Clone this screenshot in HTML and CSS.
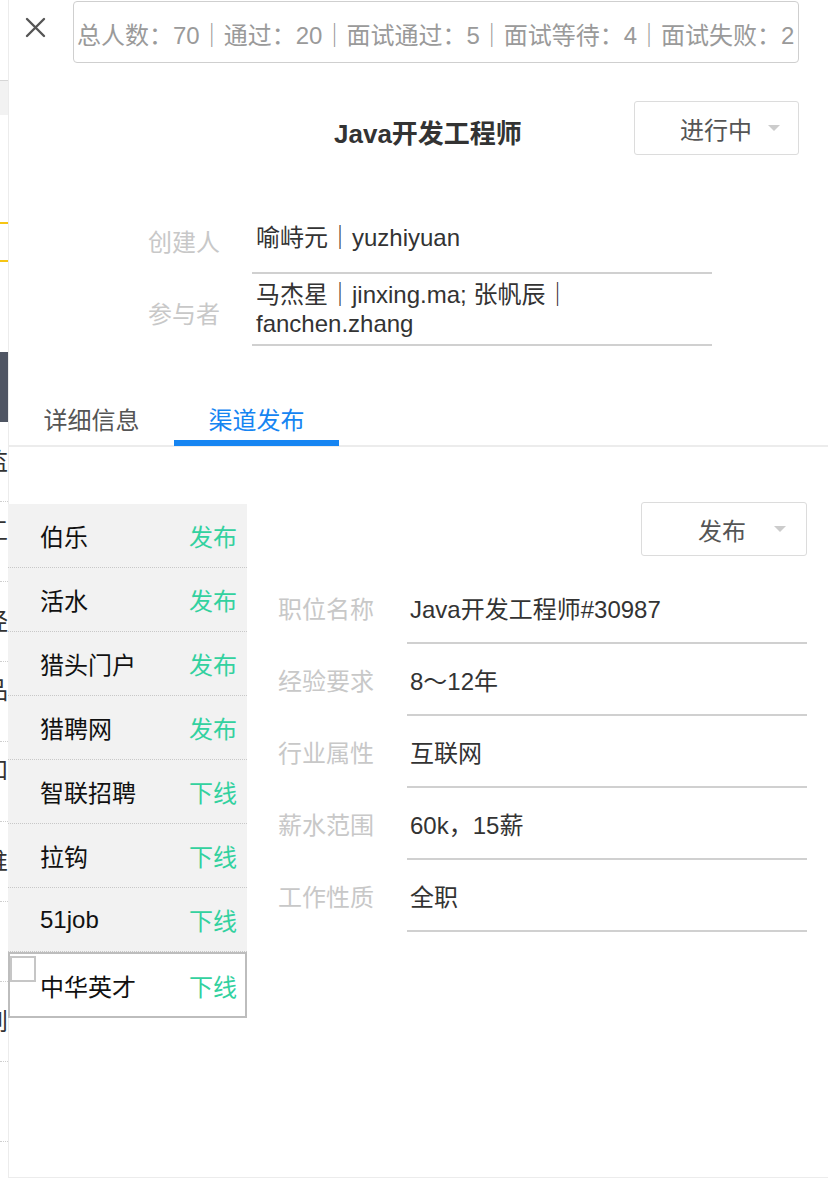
FILE: index.html
```html
<!DOCTYPE html>
<html lang="zh-CN">
<head>
<meta charset="utf-8">
<title>Java开发工程师 - 渠道发布</title>
<link rel="stylesheet" href="styles.css">
</head>
<body>
<div class="screen">
  <div class="backdrop">
    <div class="bd-space bd-h80"></div>
    <div class="bd-rule"></div>
    <div class="bd-gray"></div>
    <div class="bd-space bd-h107"></div>
    <div class="bd-yellow"></div>
    <div class="bd-space bd-h36"></div>
    <div class="bd-yellow"></div>
    <div class="bd-space bd-h90"></div>
    <div class="bd-dark"></div>
    <div class="bd-row"><span class="bd-char">监</span></div>
    <div class="bd-row bd-row-top"><span class="bd-char">工</span></div>
    <div class="bd-row"><span class="bd-char">经</span></div>
    <div class="bd-row bd-row-top"><span class="bd-char">品</span></div>
    <div class="bd-row bd-row-top"><span class="bd-char">和</span></div>
    <div class="bd-row"><span class="bd-char">推</span></div>
    <div class="bd-row"></div>
    <div class="bd-row"><span class="bd-char">到</span></div>
    <div class="bd-row"></div>
  </div>

  <div class="panel">
    <div class="topbar">
      <button class="close" type="button" aria-label="关闭">
        <svg width="21" height="21" viewBox="0 0 21 21"><path d="M2 2 L19 19 M19 2 L2 19" stroke="#555" stroke-width="2.4" stroke-linecap="round" fill="none"/></svg>
      </button>
      <div class="stats">总人数：70｜通过：20｜面试通过：5｜面试等待：4｜面试失败：2</div>
    </div>

    <div class="title-row">
      <h1 class="title">Java开发工程师</h1>
      <div class="select select-status"><span class="select-text">进行中</span><i class="caret"></i></div>
    </div>

    <div class="people">
      <div class="person-row">
        <div class="plabel">创建人</div>
        <div class="pvalue">喻峙元｜yuzhiyuan</div>
      </div>
      <div class="person-row">
        <div class="plabel">参与者</div>
        <div class="pvalue">马杰星｜jinxing.ma; 张帆辰｜<br>fanchen.zhang</div>
      </div>
    </div>

    <div class="tabs">
      <div class="tab">详细信息</div>
      <div class="tab tab-active">渠道发布</div>
    </div>

    <div class="channel-section">
      <ul class="channels">
        <li class="channel"><span class="ch-name">伯乐</span><span class="ch-action">发布</span></li>
        <li class="channel"><span class="ch-name">活水</span><span class="ch-action">发布</span></li>
        <li class="channel"><span class="ch-name">猎头门户</span><span class="ch-action">发布</span></li>
        <li class="channel"><span class="ch-name">猎聘网</span><span class="ch-action">发布</span></li>
        <li class="channel"><span class="ch-name">智联招聘</span><span class="ch-action">下线</span></li>
        <li class="channel"><span class="ch-name">拉钩</span><span class="ch-action">下线</span></li>
        <li class="channel"><span class="ch-name">51job</span><span class="ch-action">下线</span></li>
        <li class="channel channel-selected"><i class="checkbox"></i><span class="ch-name">中华英才</span><span class="ch-action">下线</span></li>
      </ul>

      <div class="details">
        <div class="select select-publish"><span class="select-text">发布</span><i class="caret"></i></div>
        <div class="fields">
          <div class="field-row"><div class="flabel">职位名称</div><div class="fvalue">Java开发工程师#30987</div></div>
          <div class="field-row"><div class="flabel">经验要求</div><div class="fvalue">8～12年</div></div>
          <div class="field-row"><div class="flabel">行业属性</div><div class="fvalue">互联网</div></div>
          <div class="field-row"><div class="flabel">薪水范围</div><div class="fvalue">60k，15薪</div></div>
          <div class="field-row"><div class="flabel">工作性质</div><div class="fvalue">全职</div></div>
        </div>
      </div>
    </div>
  </div>
</div>
</body>
</html>
```

FILE: styles.css
```css
* { box-sizing: border-box; }

html, body {
  margin: 0;
  padding: 0;
  background: #fff;
}

body {
  font-family: "Liberation Sans", "Noto Sans CJK SC", sans-serif;
  font-size: 24px;
  color: #333;
}

.screen {
  display: flex;
  width: 828px;
  height: 1198px;
  overflow: hidden;
  background: #fff;
}

/* ---------- background page sliver ---------- */
.backdrop {
  flex: none;
  width: 8px;
  display: flex;
  flex-direction: column;
  overflow: hidden;
}
.bd-space { flex: none; }
.bd-h80 { height: 80px; }
.bd-h107 { height: 107px; }
.bd-h36 { height: 36px; }
.bd-h90 { height: 90px; }
.bd-rule { flex: none; height: 1px; background: #d6d6d6; }
.bd-gray { flex: none; height: 34px; background: #f2f2f2; }
.bd-yellow { flex: none; height: 2px; background: #f6c514; }
.bd-dark { flex: none; height: 70px; background: #4f5563; }
.bd-row {
  flex: none;
  height: 80px;
  border-bottom: 1px dotted #cfcfcf;
  display: flex;
  align-items: center;
  white-space: nowrap;
}
.bd-row-top { align-items: flex-start; padding-top: 14px; }
.bd-char {
  margin-left: -16px;
  font-size: 24px;
  color: #333;
  line-height: 30px;
}

/* ---------- panel ---------- */
.panel {
  flex: 1;
  height: 1178px;
  border-left: 1px solid #ececec;
  border-bottom: 1px solid #ececec;
  padding-top: 1px;
  display: flex;
  flex-direction: column;
}

.topbar {
  display: flex;
  align-items: flex-start;
  height: 63px;
}
.close {
  flex: none;
  width: 64px;
  height: 62px;
  padding: 16px 0 0 16px;
  margin: 0;
  border: 0;
  background: none;
  display: flex;
  align-items: flex-start;
  justify-content: flex-start;
}
.stats {
  flex: none;
  width: 726px;
  height: 62px;
  border: 1px solid #cfcfcf;
  border-radius: 4px;
  padding: 8px 0 0 3px;
  line-height: 52px;
  font-size: 24px;
  color: #9a9a9a;
  white-space: nowrap;
  overflow: hidden;
}

.title-row {
  display: flex;
  align-items: center;
  margin-top: 37px;
  height: 54px;
}
.title {
  margin: 0 0 0 325px;
  padding-top: 12px;
  font-size: 26px;
  font-weight: bold;
  color: #333;
  line-height: 30px;
}

.select {
  flex: none;
  height: 54px;
  border: 1px solid #dcdcdc;
  border-radius: 3px;
  display: flex;
  align-items: center;
  justify-content: flex-end;
  color: #555;
  font-size: 24px;
}
.select-status {
  margin-left: auto;
  margin-right: 29px;
  width: 165px;
  padding-right: 18px;
  gap: 16px;
}
.select-publish {
  margin-left: auto;
  width: 166px;
  padding-right: 20px;
  gap: 28px;
}
.caret {
  display: block;
  width: 0;
  height: 0;
  border-left: 6px solid transparent;
  border-right: 6px solid transparent;
  border-top: 6px solid #cccccc;
}

.people {
  margin-top: 47px;
  display: flex;
  flex-direction: column;
}
.person-row {
  display: flex;
  height: 72px;
}
.plabel {
  flex: none;
  width: 211px;
  display: flex;
  align-items: center;
  justify-content: flex-end;
  padding-top: 4px;
  color: #c8c8c8;
}
.pvalue {
  flex: none;
  width: 460px;
  margin-left: 32px;
  padding-left: 4px;
  display: flex;
  align-items: center;
  border-bottom: 2px solid #d0d0d0;
  color: #333;
  line-height: 29px;
}

.tabs {
  margin-top: 40px;
  display: flex;
  border-bottom: 2px solid #ececec;
}
.tab {
  flex: none;
  width: 165px;
  padding-top: 20px;
  padding-bottom: 4px;
  line-height: 30px;
  text-align: center;
  color: #555;
  border-bottom: 6px solid transparent;
  margin-bottom: -1px;
}
.tab-active {
  color: #1685f2;
  border-bottom-color: #1685f2;
}

.channel-section {
  display: flex;
  align-items: flex-start;
  padding-top: 55px;
}

.channels {
  flex: none;
  list-style: none;
  margin: 2px 0 0 -1px;
  padding: 0;
  width: 239px;
}
.channel {
  position: relative;
  height: 64px;
  background: #f2f2f2;
  border-bottom: 1px dotted #c8c8c8;
  display: flex;
  align-items: center;
  justify-content: space-between;
  padding: 0 10px 0 32px;
}
.ch-name { color: #111; }
.ch-action { color: #33d19f; }
.channel-selected {
  height: 66px;
  background: #fff;
  border: 2px solid #bdbdbd;
  padding: 0 8px 0 30px;
}
.checkbox {
  position: absolute;
  top: 2px;
  left: 0;
  width: 26px;
  height: 26px;
  border: 2px solid #c6c6c6;
  background: #fff;
}

.details {
  flex: 1;
  padding-right: 21px;
  display: flex;
  flex-direction: column;
}
.fields {
  margin-top: 16px;
  display: flex;
  flex-direction: column;
}
.field-row {
  display: flex;
  height: 72px;
}
.flabel {
  flex: none;
  width: 160px;
  padding-left: 31px;
  padding-bottom: 2px;
  display: flex;
  align-items: center;
  color: #c8c8c8;
}
.fvalue {
  flex: 1;
  padding-left: 3px;
  display: flex;
  align-items: center;
  border-bottom: 2px solid #d0d0d0;
  color: #333;
}
```
